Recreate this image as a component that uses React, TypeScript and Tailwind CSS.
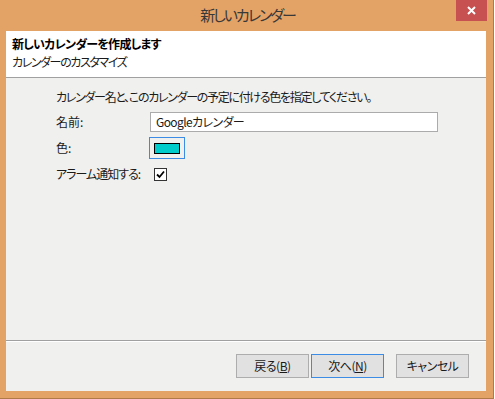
import React from 'react';

const jp = "[font-family:'Noto_Sans_CJK_JP',sans-serif] [font-feature-settings:'palt']";

const DialogButton = ({ label, isDefault }: { label: React.ReactNode; isDefault?: boolean }) => (
  <button
    className={`w-[73px] h-[24px] flex items-center justify-center text-[12px] tracking-[-0.5px] text-[#1a1a1a] bg-[#E1E1E1] border ${
      isDefault ? 'border-[#3C8CE6]' : 'border-[#ADADAD]'
    }`}
  >
    {label}
  </button>
);

export default function App() {
  return (
    <div className={`w-[495px] h-[399px] bg-white flex ${jp}`}>
      <div className="w-[494px] h-[399px] bg-[#E3A266] border-r border-b border-[#B07A48] flex flex-col">
        {/* Title bar */}
        <div className="relative h-[31px] shrink-0 flex items-center justify-center">
          <span className="text-[15px] tracking-[-2px] text-[#383838] pl-[2px]">新しいカレンダー</span>
          <div className="absolute top-0 right-[6px] w-[31px] h-[21px] bg-[#C75050] flex items-center justify-center">
            <svg width="9" height="9" viewBox="0 0 9 9">
              <path d="M1 1 L8 8 M8 1 L1 8" stroke="white" strokeWidth="2" />
            </svg>
          </div>
        </div>

        {/* Client area */}
        <div className="ml-[6px] w-[480px] h-[360px] bg-[#F0F0EE] flex flex-col">
          {/* Header */}
          <div className="h-[47px] shrink-0 bg-white border-b border-[#A0A0A0] pl-[6px] pt-[5px] flex flex-col">
            <span className="text-[12px] font-bold tracking-[-0.7px] text-black leading-[16px]">新しいカレンダーを作成します</span>
            <span className="text-[12px] tracking-[-1.4px] text-[#1a1a1a] leading-[16px] mt-[2px]">カレンダーのカスタマイズ</span>
          </div>

          {/* Form */}
          <div className="flex-1 pl-[50px] pt-[11px] text-[12px] text-[#1a1a1a]">
            <div className="h-[16px] leading-[16px] tracking-[-1.3px]">カレンダー名と、このカレンダーの予定に付ける色を指定してください。</div>
            <div className="mt-[7px] h-[20px] flex items-center">
              <span className="w-[94px]">名前:</span>
              <div className="w-[288px] h-[20px] bg-white border border-[#ABABAB] flex items-center pl-[5px] text-[12px] tracking-[-0.6px]">
                Googleカレンダー
              </div>
            </div>
            <div className="mt-[5px] h-[22px] flex items-center">
              <span className="w-[93px]">色:</span>
              <div className="w-[36px] h-[22px] border border-[#3C8CE6] bg-[#F0F0EE] flex items-center justify-center">
                <div className="w-[26px] h-[11px] bg-[#00CCCC] border border-black" />
              </div>
            </div>
            <div className="mt-[8px] h-[14px] flex items-center">
              <span className="w-[98px] tracking-[-1px]">アラーム通知する:</span>
              <div className="w-[13px] h-[13px] bg-white border border-[#333] flex items-center justify-center">
                <svg width="9" height="9" viewBox="0 0 9 9">
                  <path d="M1 4.5 L3.5 7 L8 1.5" stroke="black" strokeWidth="1.8" fill="none" />
                </svg>
              </div>
            </div>
          </div>

          {/* Buttons */}
          <div className="h-[51px] shrink-0 border-t border-[#A0A0A0]">
            <div className="h-full border-t border-white flex justify-end items-start pt-[12px] pr-[17px]">
              <DialogButton label={<>戻る(<span className="underline">B</span>)</>} />
              <div className="w-[2px]" />
              <DialogButton isDefault label={<>次へ(<span className="underline">N</span>)</>} />
              <div className="w-[12px]" />
              <DialogButton label="キャンセル" />
            </div>
          </div>
        </div>
      </div>
    </div>
  );
}
